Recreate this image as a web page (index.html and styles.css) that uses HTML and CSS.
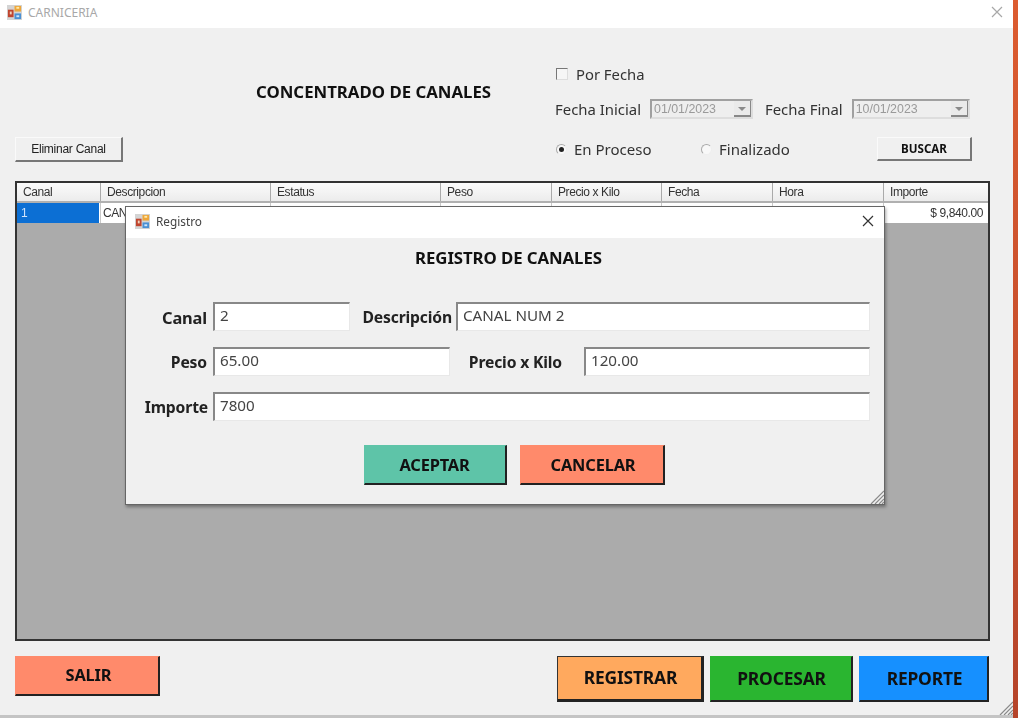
FILE: index.html
```html
<!DOCTYPE html>
<html lang="es">
<head>
<meta charset="utf-8">
<title>CARNICERIA</title>
<link rel="stylesheet" href="styles.css">
</head>
<body>
<svg class="defs" width="0" height="0" aria-hidden="true">
  <symbol id="app-icon" viewBox="0 0 16 16">
    <rect x="0" y="0" width="16" height="16" fill="#d4d4d4"/>
    <rect x="8" y="1" width="7" height="6" fill="#eea63a"/>
    <rect x="1" y="5" width="6" height="8" fill="#c0442e"/>
    <rect x="3" y="7" width="2" height="3" fill="#f0d4bc"/>
    <rect x="8" y="9" width="7" height="6" fill="#4a90d4"/>
    <rect x="10" y="2" width="3" height="2" fill="#ffe9a8"/>
    <rect x="10" y="11" width="3" height="2" fill="#cfe6fa"/>
  </symbol>
  <symbol id="grip" viewBox="0 0 14 14">
    <path d="M14 1 1 14M14 5 5 14M14 9 9 14M14 12 12 14" stroke="#8a8a8a" stroke-width="1.2" fill="none"/>
  </symbol>
</svg>

<main class="window">
  <header class="titlebar">
    <svg class="app-icon"><use href="#app-icon"/></svg>
    <span class="window-title">CARNICERIA</span>
    <svg class="close close-dim" viewBox="0 0 12 12"><path d="M1 1 11 11M11 1 1 11"/></svg>
  </header>

  <div class="client">
    <section class="top">
      <div class="top-left">
        <h1 class="heading">CONCENTRADO DE CANALES</h1>
        <button class="plain-btn delete-btn" type="button">Eliminar Canal</button>
      </div>
      <div class="filters">
        <label class="check-row"><span class="checkbox"></span>Por Fecha</label>
        <div class="date-row">
          <span class="date-label">Fecha Inicial</span>
          <span class="date-box date-box-first"><span>01/01/2023</span><span class="drop"></span></span>
          <span class="date-label date-label-second">Fecha Final</span>
          <span class="date-box date-box-second"><span>10/01/2023</span><span class="drop"></span></span>
        </div>
        <div class="radio-row">
          <label class="radio-item radio-first"><span class="radio radio-on"></span>En Proceso</label>
          <label class="radio-item radio-second"><span class="radio"></span>Finalizado</label>
          <button class="plain-btn search-btn" type="button">BUSCAR</button>
        </div>
      </div>
    </section>

    <section class="grid">
      <div class="grid-row grid-head">
        <span>Canal</span><span>Descripcion</span><span>Estatus</span><span>Peso</span><span>Precio x Kilo</span><span>Fecha</span><span>Hora</span><span>Importe</span>
      </div>
      <div class="grid-row grid-body">
        <span class="cell-selected">1</span><span>CAN</span><span></span><span></span><span></span><span></span><span></span><span class="cell-money">$ 9,840.00</span>
      </div>
    </section>

    <footer class="actions">
      <button class="color-btn btn-salir" type="button">SALIR</button>
      <div class="actions-right">
        <button class="color-btn btn-big btn-registrar" type="button">REGISTRAR</button>
        <button class="color-btn btn-big btn-procesar" type="button">PROCESAR</button>
        <button class="color-btn btn-big btn-reporte" type="button">REPORTE</button>
      </div>
    </footer>
    <svg class="grip main-grip"><use href="#grip"/></svg>
  </div>
</main>

<aside class="dialog">
  <header class="dialog-bar">
    <svg class="app-icon"><use href="#app-icon"/></svg>
    <span class="dialog-title">Registro</span>
    <svg class="close" viewBox="0 0 12 12"><path d="M1 1 11 11M11 1 1 11"/></svg>
  </header>
  <div class="dialog-body">
    <h2 class="dialog-heading">REGISTRO DE CANALES</h2>
    <div class="form-row">
      <span class="f-label f-canal">Canal</span>
      <span class="field f-w137">2</span>
      <span class="f-label f-desc">Descripción</span>
      <span class="field f-grow">CANAL NUM 2</span>
    </div>
    <div class="form-row">
      <span class="f-label f-peso">Peso</span>
      <span class="field f-w237">65.00</span>
      <span class="f-label f-precio">Precio x Kilo</span>
      <span class="field f-grow">120.00</span>
    </div>
    <div class="form-row">
      <span class="f-label f-importe">Importe</span>
      <span class="field f-grow">7800</span>
    </div>
    <div class="dialog-actions">
      <button class="color-btn btn-aceptar" type="button">ACEPTAR</button>
      <button class="color-btn btn-cancelar" type="button">CANCELAR</button>
    </div>
  </div>
  <svg class="grip dialog-grip"><use href="#grip"/></svg>
</aside>
</body>
</html>
```
FILE: styles.css
```css
* { box-sizing: border-box; }
html, body { margin: 0; padding: 0; }
body {
  width: 1018px;
  height: 718px;
  overflow: hidden;
  position: relative;
  background: linear-gradient(#dc5c30, #b5442a);
  font-family: "Noto Sans", sans-serif;
  color: #222;
  filter: blur(0.4px);
}
.defs { position: absolute; }
button { font-family: inherit; padding: 0; margin: 0; }

.window {
  width: 1013px;
  height: 715px;
  background: #f0f0f0;
  display: flex;
  flex-direction: column;
  box-shadow: 0 3px 0 #c4c4c4;
}
.titlebar {
  height: 28px;
  background: #fff;
  display: flex;
  align-items: center;
  padding: 0 10px 4px 7px;
  flex: none;
}
.app-icon { width: 15px; height: 15px; flex: none; }
.window-title {
  margin-left: 6px;
  font-size: 12px;
  color: #a8a8a8;
}
.close {
  margin-left: auto;
  width: 12px;
  height: 12px;
  fill: none;
  stroke: #333;
  stroke-width: 1.2;
}
.close-dim { stroke: #a8a8a8; }

.client { flex: 1; padding: 0 23px 0 15px; display: flex; flex-direction: column; position: relative; }

.top { height: 153px; display: flex; flex: none; }
.top-left { width: 540px; display: flex; flex-direction: column; }
.heading {
  margin: 53px 0 0 241px;
  font-size: 16.8px;
  line-height: 22px;
  font-weight: 700;
  color: #111;
  white-space: nowrap;
}
.plain-btn {
  background: #f0f0f0;
  border: 1px solid #fafafa;
  border-right: 2px solid #777;
  border-bottom: 2px solid #777;
  color: #222;
}
.delete-btn {
  margin-top: 34px;
  width: 108px;
  height: 25px;
  font-family: "Liberation Sans", sans-serif;
  font-size: 12px;
  letter-spacing: -0.25px;
}
.filters { flex: none; width: 420px; font-size: 14.8px; color: #333; }
.check-row {
  display: flex;
  align-items: center;
  margin: 36px 0 0 1px;
  height: 20px;
}
.checkbox {
  width: 12px;
  height: 12px;
  border: 1px solid #777;
  border-right-color: #ddd;
  border-bottom-color: #ddd;
  background: #f6f6f6;
  margin-right: 8px;
}
.date-row { display: flex; align-items: center; height: 22px; margin-top: 14px; }
.date-label { font-size: 14.9px; }
.date-label-second { margin-left: 12px; }
.date-box {
  margin-left: 9px;
  height: 20px;
  background: #eee;
  border: 2px solid #a0a0a0;
  border-right-color: #ddd;
  border-bottom-color: #ddd;
  display: flex;
  align-items: center;
  justify-content: space-between;
  font-family: "Liberation Sans", sans-serif;
  font-size: 12.4px;
  color: #9a9a9a;
  padding-left: 2px;
}
.date-box-first { width: 103px; }
.date-box-second { width: 118px; }
.drop {
  width: 17px;
  height: 16px;
  background: #eaeaea;
  border-right: 1px solid #888;
  border-bottom: 2px solid #888;
  position: relative;
}
.drop::after {
  content: "";
  position: absolute;
  left: 4px;
  top: 6px;
  border: 4px solid transparent;
  border-top: 4px solid #8a8a8a;
  border-bottom: 0;
}
.radio-row { display: flex; align-items: center; height: 24px; margin-top: 17px; font-size: 15px; }
.radio-item { display: flex; align-items: center; }
.radio-first { margin-left: 1px; width: 145px; }
.radio-second { width: 176px; }
.radio {
  width: 11px;
  height: 11px;
  border-radius: 50%;
  background: #f8f8f8;
  border: 1px solid #aaa;
  border-right-color: #eee;
  border-bottom-color: #eee;
  margin-right: 7px;
  position: relative;
}
.radio-on::after {
  content: "";
  position: absolute;
  left: 2px;
  top: 2px;
  width: 5px;
  height: 5px;
  border-radius: 50%;
  background: #222;
}
.search-btn {
  width: 95px;
  height: 24px;
  font-size: 11.6px;
  font-weight: 700;
  color: #111;
}

.grid {
  flex: none;
  height: 460px;
  width: 975px;
  border: 2px solid #333;
  background: #ababab;
  font-family: "Liberation Sans", sans-serif;
  font-size: 12px;
  letter-spacing: -0.4px;
  color: #333;
}
.grid-row {
  display: grid;
  grid-template-columns: 83px 170px 170px 111px 110px 111px 111px 105px;
}
.grid-head { height: 20px; background: linear-gradient(#fbfbfb, #ececec); border-bottom: 2px solid #b0b0b0; }
.grid-head span { padding: 1px 0 0 6px; border-left: 1px solid #aaa; line-height: 16px; }
.grid-head span:first-child { border-left: 0; }
.grid-body { height: 20px; background: #fff; line-height: 20px; }
.grid-body span { padding-left: 2px; border-left: 1px solid #c8c8c8; }
.grid-body .cell-selected { background: #0c6fd4; color: #cfe4fb; border-left: 0; margin-right: 1px; padding-left: 4px; }
.grid-body .cell-money { text-align: right; padding-right: 5px; }

.actions { display: flex; justify-content: space-between; align-items: flex-start; margin-top: 15px; width: 974px; }
.actions-right { display: flex; gap: 6px; }
.color-btn {
  border: 1px solid transparent;
  border-right: 2px solid #222;
  border-bottom: 2px solid #222;
  font-size: 16.4px;
  letter-spacing: -0.01em;
  font-weight: 700;
  color: #111;
}
.btn-salir { width: 145px; height: 40px; background: #ff8a6b; padding: 0 0 3px 3px; }
.btn-big { height: 46px; font-size: 17.4px; padding-bottom: 2px; }
.btn-registrar {
  width: 147px;
  background: #ffa95e;
  border-top: 1px solid #333;
  border-left: 1px solid #333;
  border-right-width: 3px;
  border-bottom-width: 3px;
  padding-left: 2px;
}
.btn-procesar { width: 143px; background: #2ab530; padding-left: 1px; }
.btn-reporte { width: 130px; background: #1690ff; padding-left: 2px; }
.grip { position: absolute; width: 14px; height: 14px; }
.main-grip { right: 0; bottom: 0; }

.dialog {
  position: absolute;
  left: 125px;
  top: 206px;
  width: 760px;
  height: 299px;
  background: #f0f0f0;
  border: 1px solid #666;
  box-shadow: 1px 2px 3px rgba(0,0,0,.35);
}
.dialog-bar {
  height: 31px;
  background: #fff;
  display: flex;
  align-items: center;
  padding: 0 10px 3px 9px;
}
.dialog-title { margin-left: 6px; font-size: 11.8px; color: #444; }
.dialog-body { padding: 0 14px 0 0; }
.dialog-heading {
  margin: 10px 0 0;
  text-align: center;
  font-size: 16.8px;
  line-height: 20px;
  font-weight: 700;
  color: #111;
  padding-left: 21px;
  letter-spacing: -0.005em;
}
.form-row { display: flex; align-items: center; height: 29px; font-size: 15px; color: #444; }
.dialog-heading + .form-row { margin-top: 34px; }
.form-row + .form-row { margin-top: 16px; }
.f-label { font-size: 15.7px; font-weight: 700; color: #222; white-space: nowrap; text-align: right; letter-spacing: -0.01em; }
.f-canal { width: 81px; margin-right: 6px; padding-top: 1px; font-size: 16.4px; }
.f-peso { width: 81px; margin-right: 6px; }
.f-importe { width: 82px; margin-right: 5px; }
.f-desc { margin: 0 4px 0 10px; width: 92px; }
.f-precio { margin: 0 22px 0 16px; width: 96px; }
.field {
  height: 29px;
  background: #fff;
  border-top: 2px solid #888;
  border-left: 2px solid #888;
  border-right: 1px solid #e8e8e8;
  border-bottom: 1px solid #e8e8e8;
  padding: 0 0 5px 5px;
  display: flex;
  align-items: center;
  font-size: 15.2px;
}
.f-w137 { width: 137px; }
.f-w237 { width: 237px; }
.f-grow { flex: 1; }
.dialog-actions { display: flex; justify-content: center; gap: 13px; margin-top: 24px; padding-left: 32px; }
.btn-aceptar { width: 143px; height: 40px; background: #5ec4a8; }
.btn-cancelar { width: 145px; height: 40px; background: #ff8a6b; padding-left: 3px; }
.dialog-grip { right: 0; bottom: 0; }
```
